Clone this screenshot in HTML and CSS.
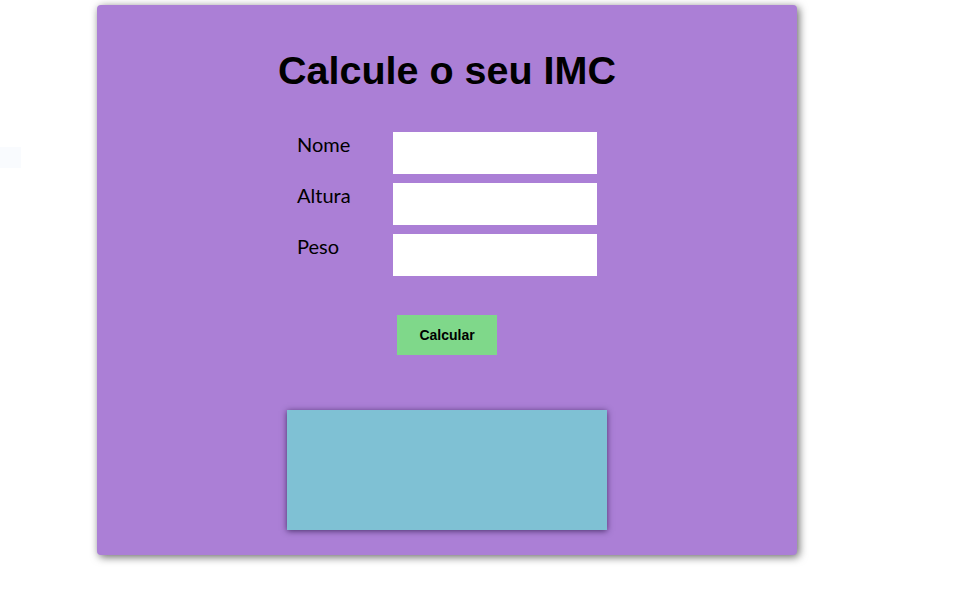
FILE: index.html
```html
<!DOCTYPE html>
<html lang="pt">
<head>
<meta charset="utf-8">
<title>Calculadora IMC</title>
<link rel="stylesheet" href="styles.css">
</head>
<body>
<div class="page">
  <div class="ghost"></div>
  <main class="card">
    <h1 class="title">Calcule o seu IMC</h1>
    <form class="form">
      <label class="label" for="nome">Nome</label>
      <input class="field" id="nome" type="text">
      <label class="label" for="altura">Altura</label>
      <input class="field" id="altura" type="text">
      <label class="label" for="peso">Peso</label>
      <input class="field" id="peso" type="text">
    </form>
    <button class="btn" type="button">Calcular</button>
    <div class="result"></div>
  </main>
</div>
</body>
</html>
```
FILE: styles.css
```css
html, body {
  margin: 0;
  padding: 0;
  background: #ffffff;
}
.page {
  display: flex;
  align-items: flex-start;
  padding-top: 5px;
  min-height: 594px;
  box-sizing: border-box;
}
.ghost {
  width: 21px;
  height: 21px;
  margin-top: 142px;
  margin-right: 76px;
  background: #f9fbfe;
}
.card {
  width: 700px;
  height: 550px;
  box-sizing: border-box;
  background: #ab7fd6;
  border-radius: 4px;
  box-shadow: 2px 2px 8px rgba(0, 0, 0, 0.6);
  display: flex;
  flex-direction: column;
  align-items: center;
  padding-top: 42px;
}
.title {
  margin: 0;
  font-family: "Liberation Sans", Arial, sans-serif;
  font-weight: bold;
  font-size: 39.5px;
  line-height: 46px;
  color: #000;
}
.form {
  margin-top: 39px;
  display: grid;
  grid-template-columns: 96px 204px;
  row-gap: 9px;
}
.label {
  font-family: Lato, "Liberation Sans", sans-serif;
  font-size: 20px;
  line-height: 24px;
  color: #000;
}
.field {
  width: 204px;
  height: 42px;
  box-sizing: border-box;
  border: none;
  background: #fff;
  margin: 0;
  padding: 0 6px;
}
.btn {
  margin-top: 39px;
  width: 100px;
  height: 40px;
  border: none;
  background: #7fd88a;
  font-family: "Liberation Sans", Arial, sans-serif;
  font-weight: bold;
  font-size: 14px;
  color: #000;
  padding: 0;
}
.result {
  margin-top: 55px;
  width: 320px;
  height: 120px;
  background: #7fc1d4;
  box-shadow: 0 1px 6px rgba(40, 20, 70, 0.75);
}
```
